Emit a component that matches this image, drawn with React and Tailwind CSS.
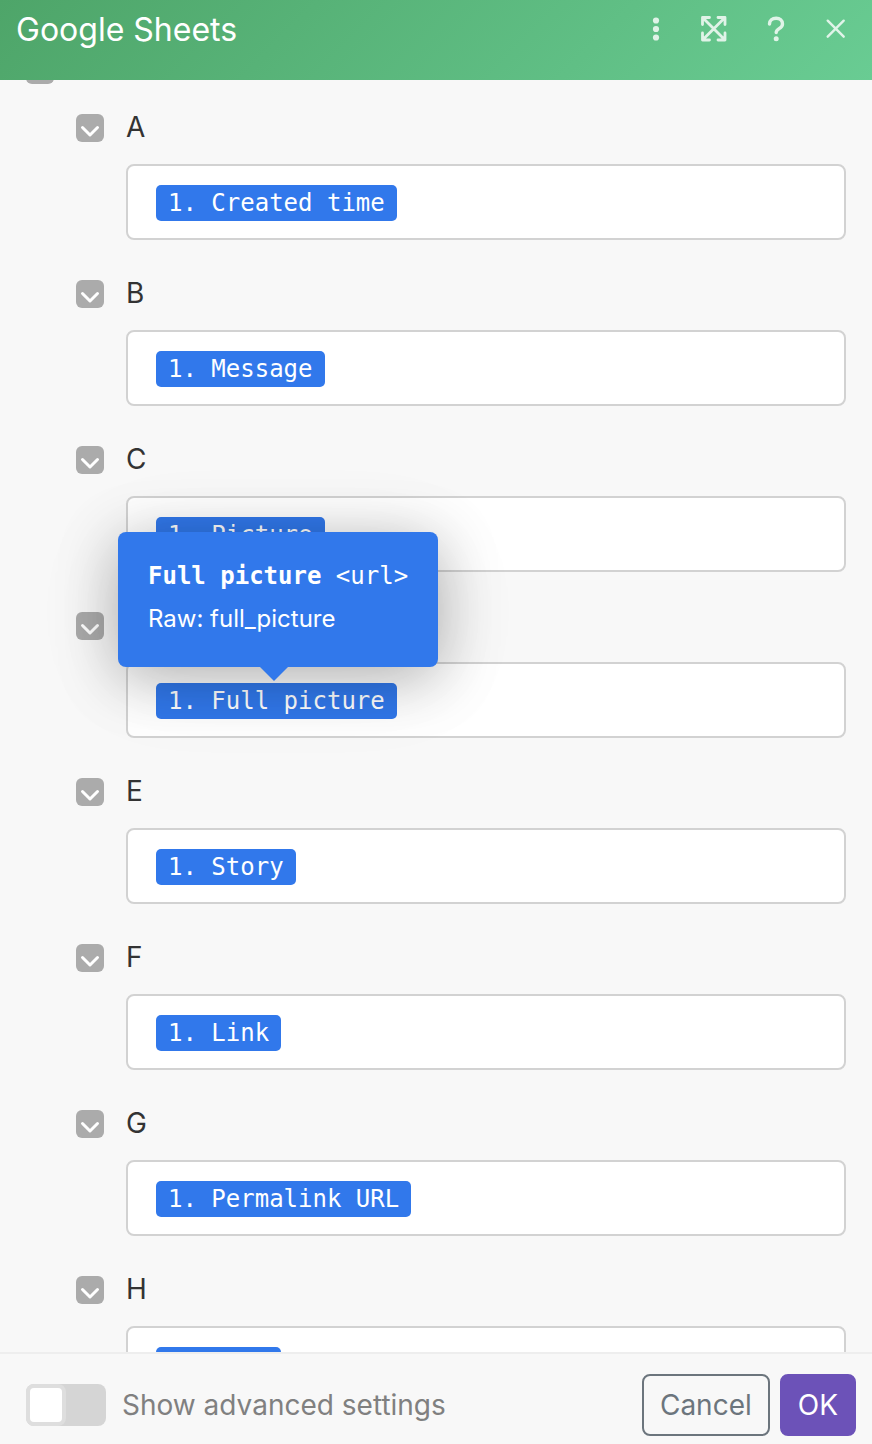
import React, { useState } from 'react';

const fields = [
    { column: 'A', value: '1. Created time' },
    { column: 'B', value: '1. Message' },
    { column: 'C', value: '1. Picture' },
    { column: 'D', value: '1. Full picture', tooltip: { name: 'Full picture', type: '<url>', raw: 'full_picture' } },
    { column: 'E', value: '1. Story' },
    { column: 'F', value: '1. Link' },
    { column: 'G', value: '1. Permalink URL' },
    { column: 'H', value: '1. Name' },
];

const HeaderButton = ({ label, children }) => (
    <button type="button" aria-label={label} className="h-7 w-7 text-white/80 hover:text-white">
        <svg viewBox="0 0 28 28" className="h-7 w-7 overflow-visible" fill="none" stroke="currentColor" strokeLinecap="round" strokeLinejoin="round">
            {children}
        </svg>
    </button>
);

const CollapseButton = ({ label }) => (
    <button type="button" aria-label={label} className="block h-7 w-7 rounded-md bg-[#ababab]">
        <svg viewBox="0 0 28 28" className="h-7 w-7" fill="none" stroke="white" strokeWidth="3" strokeLinecap="round" strokeLinejoin="round">
            <path d="M6.5 13.5 14 21l7.5-7.5" />
        </svg>
    </button>
);

const Tooltip = ({ name, type, raw }) => (
    <div role="tooltip" className="absolute bottom-full left-[-38px] z-10 mb-4 whitespace-nowrap rounded-lg bg-[#3178eb] px-[30px] pt-6 pb-7 text-2xl text-white shadow-[0_10px_60px_rgba(0,0,0,0.28),0_12px_96px_rgba(0,0,0,0.07)]">
        <p className="mb-[3px] h-10 font-['DejaVu_Sans_Mono',monospace] leading-10">
            <strong className="font-bold">{name}</strong> {type}
        </p>
        <p className="h-10 leading-10">Raw: {raw}</p>
        <svg viewBox="0 0 28 14" className="absolute top-full left-[142px] h-[14px] w-7" fill="#3178eb">
            <path d="M0 0h28L14 14z" />
        </svg>
    </div>
);

const Field = ({ column, value, tooltip }) => {
    const id = `column-${column}`;
    return (
        <div className="grid grid-cols-[28px_1fr] gap-x-[22px] gap-y-[22px]">
            <CollapseButton label={`Collapse ${column}`} />
            <label htmlFor={id} className="h-7 text-[28px] leading-[26px] text-[#333]">{column}</label>
            <div className="col-start-2 flex h-[76px] items-start rounded-lg border-2 border-[#d2d2d2] bg-white px-7 pt-[19px]">
                <div className="relative">
                    <span className="block h-9 whitespace-nowrap rounded-[5px] bg-[#3178eb] px-3 font-['DejaVu_Sans_Mono',monospace] text-2xl leading-9 text-white">
                        {value}
                    </span>
                    {tooltip && <Tooltip {...tooltip} />}
                </div>
                <input id={id} type="text" className="h-9 min-w-0 flex-1 bg-transparent pl-1 text-2xl outline-none" />
            </div>
        </div>
    );
};

const App = () => {
    const [advanced, setAdvanced] = useState(false);

    return (
        <div className="flex h-screen flex-col bg-[#f8f8f8] font-[Inter,sans-serif]">
            <header className="relative z-20 flex h-20 shrink-0 items-center justify-between bg-linear-135 from-[#4ea569] to-[#69cc93] pr-[22px] pb-[22px] pl-4">
                <h1 className="pt-0.5 text-[32px] leading-10 text-white">Google Sheets</h1>
                <div className="flex gap-8">
                    <HeaderButton label="More">
                        <g fill="currentColor" stroke="none">
                            <circle cx="14" cy="5.5" r="3.1" />
                            <circle cx="14" cy="14" r="3.1" />
                            <circle cx="14" cy="22.5" r="3.1" />
                        </g>
                    </HeaderButton>
                    <HeaderButton label="Expand">
                        <path d="M.5 9.5V2.5h7M16 2.5h7v7M23 18v7h-7M7.5 25h-7v-7M.5 2.5 23 25M23 2.5.5 25" strokeWidth="2.8" />
                    </HeaderButton>
                    <HeaderButton label="Help">
                        <path d="M7.5 9C7.5 5.2 10.2 3.3 14.2 3.3c3.7 0 6.3 2.2 6.3 5.6 0 4.8-6.3 4.6-6.3 8.6" strokeWidth="3.4" />
                        <circle cx="14.2" cy="23.8" r="2.5" fill="currentColor" stroke="none" />
                    </HeaderButton>
                    <HeaderButton label="Close">
                        <path d="M5.7 5.7 21.7 21.7M21.7 5.7 5.7 21.7" strokeWidth="2.4" />
                    </HeaderButton>
                </div>
            </header>

            <main className="min-h-0 flex-1 overflow-y-auto pr-[26px] pl-[26px] [scrollbar-width:none]">
                <div className="-mt-6">
                    <CollapseButton label="Collapse values" />
                    <div className="mt-[30px] flex flex-col gap-10 pl-[50px]">
                        {fields.map((field) => (
                            <Field key={field.column} {...field} />
                        ))}
                    </div>
                </div>
            </main>

            <footer className="flex shrink-0 items-center justify-between border-t-2 border-[#eee] bg-[#f8f8f8] pt-5 pr-4 pb-2 pl-[26px] text-[28px] leading-10">
                <label className="flex items-center gap-4 text-[#808080]">
                    <input
                        type="checkbox"
                        checked={advanced}
                        onChange={(e) => setAdvanced(e.target.checked)}
                        className="h-[42px] w-20 appearance-none rounded-lg bg-[#d5d5d5] before:block before:h-[42px] before:w-10 before:rounded-lg before:border-4 before:border-[#dedede] before:bg-white checked:bg-[#6c52b8] checked:before:ml-10"
                    />
                    Show advanced settings
                </label>
                <div className="flex gap-[10px]">
                    <button type="button" className="h-[62px] rounded-lg border-2 border-[#6c757d] px-4 text-[#6c757d]">Cancel</button>
                    <button type="button" className="h-[62px] rounded-lg border-2 border-[#6c52b8] bg-[#6c52b8] px-4 text-white">OK</button>
                </div>
            </footer>
        </div>
    );
};

export default App;
